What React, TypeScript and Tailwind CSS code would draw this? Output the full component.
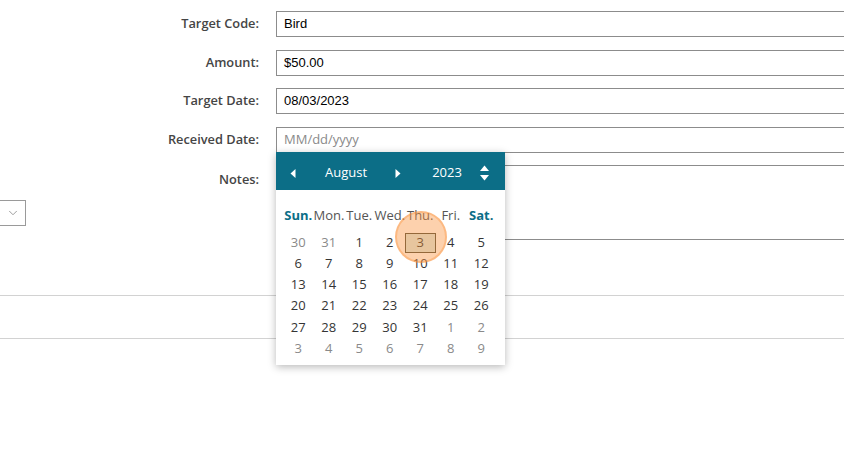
import React from "react";
import { ChevronDown } from "lucide-react";

const OPEN = { fontFamily: '"Open Sans", "Noto Sans", sans-serif' };
const ARIAL = { fontFamily: '"Liberation Sans", Arial, sans-serif' };

type Day = { d: number; other?: boolean; sel?: boolean };

const weeks: Day[][] = [
  [{ d: 30, other: true }, { d: 31, other: true }, { d: 1 }, { d: 2 }, { d: 3, sel: true }, { d: 4 }, { d: 5 }],
  [{ d: 6 }, { d: 7 }, { d: 8 }, { d: 9 }, { d: 10 }, { d: 11 }, { d: 12 }],
  [{ d: 13 }, { d: 14 }, { d: 15 }, { d: 16 }, { d: 17 }, { d: 18 }, { d: 19 }],
  [{ d: 20 }, { d: 21 }, { d: 22 }, { d: 23 }, { d: 24 }, { d: 25 }, { d: 26 }],
  [{ d: 27 }, { d: 28 }, { d: 29 }, { d: 30 }, { d: 31 }, { d: 1, other: true }, { d: 2, other: true }],
  [{ d: 3, other: true }, { d: 4, other: true }, { d: 5, other: true }, { d: 6, other: true }, { d: 7, other: true }, { d: 8, other: true }, { d: 9, other: true }],
];

const weekdays = ["Sun.", "Mon.", "Tue.", "Wed.", "Thu.", "Fri.", "Sat."];

function Row({ label, children, tall }: { label: string; children: React.ReactNode; tall?: boolean }) {
  return (
    <div className={`flex ${tall ? "h-[75px]" : "h-[26px]"}`}>
      <div
        className={`w-[233px] flex justify-end text-[12.8px] font-semibold text-[#454545] ${tall ? "items-start pt-[5px]" : "items-center"}`}
        style={OPEN}
      >
        {label}
      </div>
      <div className="ml-[17px] w-[620px] shrink-0">{children}</div>
    </div>
  );
}

function Input({ value, placeholder }: { value?: string; placeholder?: string }) {
  return (
    <div className="h-[26px] border border-[#8c8c8c] bg-white flex items-center pl-[7px]">
      {value ? (
        <span className="text-[13px] text-black" style={ARIAL}>{value}</span>
      ) : (
        <span className="text-[13px] text-[#8a8a8a]" style={OPEN}>{placeholder}</span>
      )}
    </div>
  );
}

function Calendar() {
  return (
    <div className="absolute left-[276px] top-[152px] w-[229px] bg-white shadow-[0_2px_8px_rgba(0,0,0,0.28)]" style={OPEN}>
      <div className="h-[38px] bg-[#0c6e87] flex items-center pt-[4px] text-white text-[13px]">
        <div className="w-[34px] flex justify-center">
          <svg width="6" height="9" viewBox="0 0 6 9"><polygon points="5.5,0 5.5,9 0.5,4.5" fill="white" /></svg>
        </div>
        <div className="w-[72px] text-center">August</div>
        <div className="w-[32px] flex justify-center">
          <svg width="6" height="9" viewBox="0 0 6 9"><polygon points="0.5,0 0.5,9 5.5,4.5" fill="white" /></svg>
        </div>
        <div className="w-[66px] text-center">2023</div>
        <div className="w-[8px] flex flex-col items-center gap-[4px]">
          <svg width="9" height="6" viewBox="0 0 9 6"><polygon points="0,6 9,6 4.5,0.5" fill="white" /></svg>
          <svg width="9" height="6" viewBox="0 0 9 6"><polygon points="0,0 9,0 4.5,5.5" fill="white" /></svg>
        </div>
      </div>
      <div className="relative pl-[7px] pt-[15px] pb-[6px]">
        <div className="grid grid-cols-[repeat(7,30.5px)] h-[21px] items-center text-[13px]">
          {weekdays.map((w, i) => (
            <div
              key={w}
              className={`text-center whitespace-nowrap ${i === 0 || i === 6 ? "font-bold text-[#0c6e87]" : "text-[#555]"}`}
            >
              {w}
            </div>
          ))}
        </div>
        <div className="mt-[6px] flex flex-col">
          {weeks.map((wk, r) => (
            <div key={r} className="grid grid-cols-[repeat(7,30.5px)] h-[21.2px] items-center text-[13px]">
              {wk.map((day, c) =>
                day.sel ? (
                  <div key={c} className="h-[20px] border border-[#4a4a3a] bg-[#d9ebe6] flex items-center justify-center text-[#333]">
                    {day.d}
                  </div>
                ) : (
                  <div key={c} className={`text-center ${day.other ? "text-[#8a8a8a]" : "text-[#353535]"}`}>
                    {day.d}
                  </div>
                )
              )}
            </div>
          ))}
        </div>
        <div className="absolute left-[119px] top-[21px] w-[52px] h-[52px] rounded-full bg-[rgba(251,146,60,0.42)] border-2 border-[rgba(249,140,50,0.35)] pointer-events-none" />
      </div>
    </div>
  );
}

export default function App() {
  return (
    <div className="relative w-[844px] h-[473px] overflow-hidden bg-white">
      <div className="flex">
        <div className="w-[26px] shrink-0">
          <div className="mt-[200px] -ml-[30px] w-[56px] h-[26px] border border-[#9a9a9a] bg-white flex items-center justify-end pr-[5px]">
            <ChevronDown size={14} strokeWidth={1.4} color="#888" />
          </div>
        </div>
        <div className="pt-[11px] flex flex-col gap-[12.5px]">
          <Row label="Target Code:"><Input value="Bird" /></Row>
          <Row label="Amount:"><Input value="$50.00" /></Row>
          <Row label="Target Date:"><Input value="08/03/2023" /></Row>
          <Row label="Received Date:"><Input placeholder="MM/dd/yyyy" /></Row>
          <Row label="Notes:" tall>
            <div className="h-[75px] border border-[#8c8c8c] bg-white" />
          </Row>
        </div>
      </div>
      <div className="mt-[55px] h-[1px] bg-[#d2d2d2]" />
      <div className="mt-[42px] h-[1px] bg-[#d2d2d2]" />
      <Calendar />
    </div>
  );
}
